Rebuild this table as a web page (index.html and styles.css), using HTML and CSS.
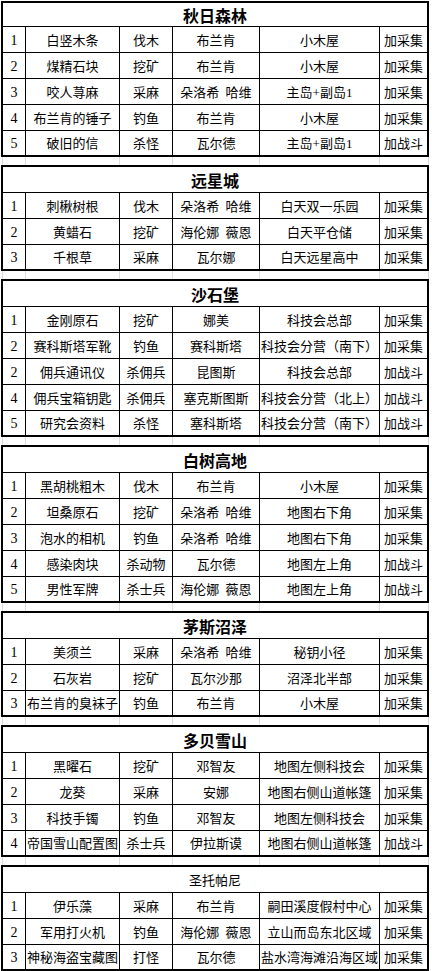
FILE: index.html
```html
<!DOCTYPE html>
<html lang="zh-CN">
<head>
<meta charset="utf-8">
<title>采集表</title>
<link rel="stylesheet" href="styles.css">
</head>
<body>
<div class="sheet">

<section class="sec first">
  <div class="title">秋日森林</div>
  <div class="row"><span class="c">1</span><span class="c">白竖木条</span><span class="c">伐木</span><span class="c">布兰肯</span><span class="c">小木屋</span><span class="c">加采集</span></div>
  <div class="row"><span class="c">2</span><span class="c">煤精石块</span><span class="c">挖矿</span><span class="c">布兰肯</span><span class="c">小木屋</span><span class="c">加采集</span></div>
  <div class="row"><span class="c">3</span><span class="c">咬人荨麻</span><span class="c">采麻</span><span class="c">朵洛希 哈维</span><span class="c">主岛+副岛1</span><span class="c">加采集</span></div>
  <div class="row"><span class="c">4</span><span class="c">布兰肯的锤子</span><span class="c">钓鱼</span><span class="c">布兰肯</span><span class="c">小木屋</span><span class="c">加采集</span></div>
  <div class="row"><span class="c">5</span><span class="c">破旧的信</span><span class="c">杀怪</span><span class="c">瓦尔德</span><span class="c">主岛+副岛1</span><span class="c">加战斗</span></div>
</section>
<div class="gap"><i></i><i></i><i></i><i></i><i></i><i></i><i></i></div>

<section class="sec">
  <div class="title">远星城</div>
  <div class="row"><span class="c">1</span><span class="c">刺楸树根</span><span class="c">伐木</span><span class="c">朵洛希 哈维</span><span class="c">白天双一乐园</span><span class="c">加采集</span></div>
  <div class="row"><span class="c">2</span><span class="c">黄蜡石</span><span class="c">挖矿</span><span class="c">海伦娜 薇恩</span><span class="c">白天平仓储</span><span class="c">加采集</span></div>
  <div class="row"><span class="c">3</span><span class="c">千根草</span><span class="c">采麻</span><span class="c">瓦尔娜</span><span class="c">白天远星高中</span><span class="c">加采集</span></div>
</section>
<div class="gap"><i></i><i></i><i></i><i></i><i></i><i></i><i></i></div>

<section class="sec">
  <div class="title">沙石堡</div>
  <div class="row"><span class="c">1</span><span class="c">金刚原石</span><span class="c">挖矿</span><span class="c">娜美</span><span class="c">科技会总部</span><span class="c">加采集</span></div>
  <div class="row"><span class="c">2</span><span class="c">赛科斯塔军靴</span><span class="c">钓鱼</span><span class="c">赛科斯塔</span><span class="c">科技会分营（南下）</span><span class="c">加采集</span></div>
  <div class="row"><span class="c">2</span><span class="c">佣兵通讯仪</span><span class="c">杀佣兵</span><span class="c">昆图斯</span><span class="c">科技会总部</span><span class="c">加战斗</span></div>
  <div class="row"><span class="c">4</span><span class="c">佣兵宝箱钥匙</span><span class="c">杀佣兵</span><span class="c">塞克斯图斯</span><span class="c">科技会分营（北上）</span><span class="c">加战斗</span></div>
  <div class="row"><span class="c">5</span><span class="c">研究会资料</span><span class="c">杀怪</span><span class="c">塞科斯塔</span><span class="c">科技会分营（南下）</span><span class="c">加战斗</span></div>
</section>
<div class="gap"><i></i><i></i><i></i><i></i><i></i><i></i><i></i></div>

<section class="sec">
  <div class="title">白树高地</div>
  <div class="row"><span class="c">1</span><span class="c">黑胡桃粗木</span><span class="c">伐木</span><span class="c">布兰肯</span><span class="c">小木屋</span><span class="c">加采集</span></div>
  <div class="row"><span class="c">2</span><span class="c">坦桑原石</span><span class="c">挖矿</span><span class="c">朵洛希 哈维</span><span class="c">地图右下角</span><span class="c">加采集</span></div>
  <div class="row"><span class="c">3</span><span class="c">泡水的相机</span><span class="c">钓鱼</span><span class="c">朵洛希 哈维</span><span class="c">地图右下角</span><span class="c">加采集</span></div>
  <div class="row"><span class="c">4</span><span class="c">感染肉块</span><span class="c">杀动物</span><span class="c">瓦尔德</span><span class="c">地图左上角</span><span class="c">加战斗</span></div>
  <div class="row"><span class="c">5</span><span class="c">男性军牌</span><span class="c">杀士兵</span><span class="c">海伦娜 薇恩</span><span class="c">地图左上角</span><span class="c">加战斗</span></div>
</section>
<div class="gap"><i></i><i></i><i></i><i></i><i></i><i></i><i></i></div>

<section class="sec">
  <div class="title">茅斯沼泽</div>
  <div class="row"><span class="c">1</span><span class="c">美须兰</span><span class="c">采麻</span><span class="c">朵洛希 哈维</span><span class="c">秘钥小径</span><span class="c">加采集</span></div>
  <div class="row"><span class="c">2</span><span class="c">石灰岩</span><span class="c">挖矿</span><span class="c">瓦尔沙那</span><span class="c">沼泽北半部</span><span class="c">加采集</span></div>
  <div class="row"><span class="c">3</span><span class="c">布兰肯的臭袜子</span><span class="c">钓鱼</span><span class="c">布兰肯</span><span class="c">小木屋</span><span class="c">加采集</span></div>
</section>
<div class="gap"><i></i><i></i><i></i><i></i><i></i><i></i><i></i></div>

<section class="sec">
  <div class="title">多贝雪山</div>
  <div class="row"><span class="c">1</span><span class="c">黑曜石</span><span class="c">挖矿</span><span class="c">邓智友</span><span class="c">地图左侧科技会</span><span class="c">加采集</span></div>
  <div class="row"><span class="c">2</span><span class="c">龙葵</span><span class="c">采麻</span><span class="c">安娜</span><span class="c">地图右侧山道帐篷</span><span class="c">加采集</span></div>
  <div class="row"><span class="c">3</span><span class="c">科技手镯</span><span class="c">钓鱼</span><span class="c">邓智友</span><span class="c">地图左侧科技会</span><span class="c">加采集</span></div>
  <div class="row"><span class="c">4</span><span class="c">帝国雪山配置图</span><span class="c">杀士兵</span><span class="c">伊拉斯谟</span><span class="c">地图右侧山道帐篷</span><span class="c">加战斗</span></div>
</section>
<div class="gap"><i></i><i></i><i></i><i></i><i></i><i></i><i></i></div>

<section class="sec">
  <div class="title plain">圣托帕尼</div>
  <div class="row"><span class="c">1</span><span class="c">伊乐藻</span><span class="c">采麻</span><span class="c">布兰肯</span><span class="c">嗣田溪度假村中心</span><span class="c">加采集</span></div>
  <div class="row"><span class="c">2</span><span class="c">军用打火机</span><span class="c">钓鱼</span><span class="c">海伦娜 薇恩</span><span class="c">立山而岛东北区域</span><span class="c">加采集</span></div>
  <div class="row"><span class="c">3</span><span class="c">神秘海盗宝藏图</span><span class="c">打怪</span><span class="c">瓦尔德</span><span class="c">盐水湾海滩沿海区域</span><span class="c">加采集</span></div>
</section>

</div>
</body>
</html>
```

FILE: styles.css
```css
html, body {
  margin: 0;
  padding: 0;
  background: #ffffff;
}

body {
  padding-top: 1px;
  font-family: "Liberation Serif", "Noto Sans CJK SC", serif;
  font-size: 13px;
  color: #000000;
  width: 432px;
}

.sheet {
  padding-left: 1px;
}

.sec {
  width: 428px;
  box-sizing: border-box;
  border: 2px solid #000000;
  display: flex;
  flex-direction: column;
}

.title {
  height: 26px;
  box-sizing: border-box;
  border-bottom: 1px solid #000000;
  display: flex;
  align-items: center;
  justify-content: center;
  font-family: "Noto Sans CJK SC", sans-serif;
  font-weight: 700;
  font-size: 16px;
  line-height: 16px;
}

.sec.first .title {
  height: 24px;
}

.title.plain {
  font-weight: 400;
  font-size: 13px;
  line-height: 13px;
}

.row {
  display: grid;
  grid-template-columns: 23px 94px 53px 87px 120px 47px;
  height: 26px;
  box-sizing: border-box;
  border-bottom: 1px solid #000000;
}

.row:last-child {
  border-bottom: 0;
  height: 24px;
}

.c {
  box-sizing: border-box;
  border-right: 1px solid #000000;
  display: flex;
  align-items: center;
  justify-content: center;
  white-space: nowrap;
  line-height: 13px;
  padding-top: 1px;
  word-spacing: 3px;
  overflow: visible;
}

.c:first-child {
  font-size: 14px;
}

.c:last-child {
  border-right: 0;
}

.gap {
  width: 428px;
  height: 8px;
  display: grid;
  grid-template-columns: 2px 23px 94px 53px 87px 120px 49px;
}

.gap i {
  display: block;
  box-sizing: border-box;
  border-right: 1px solid #d8dde6;
}
```
